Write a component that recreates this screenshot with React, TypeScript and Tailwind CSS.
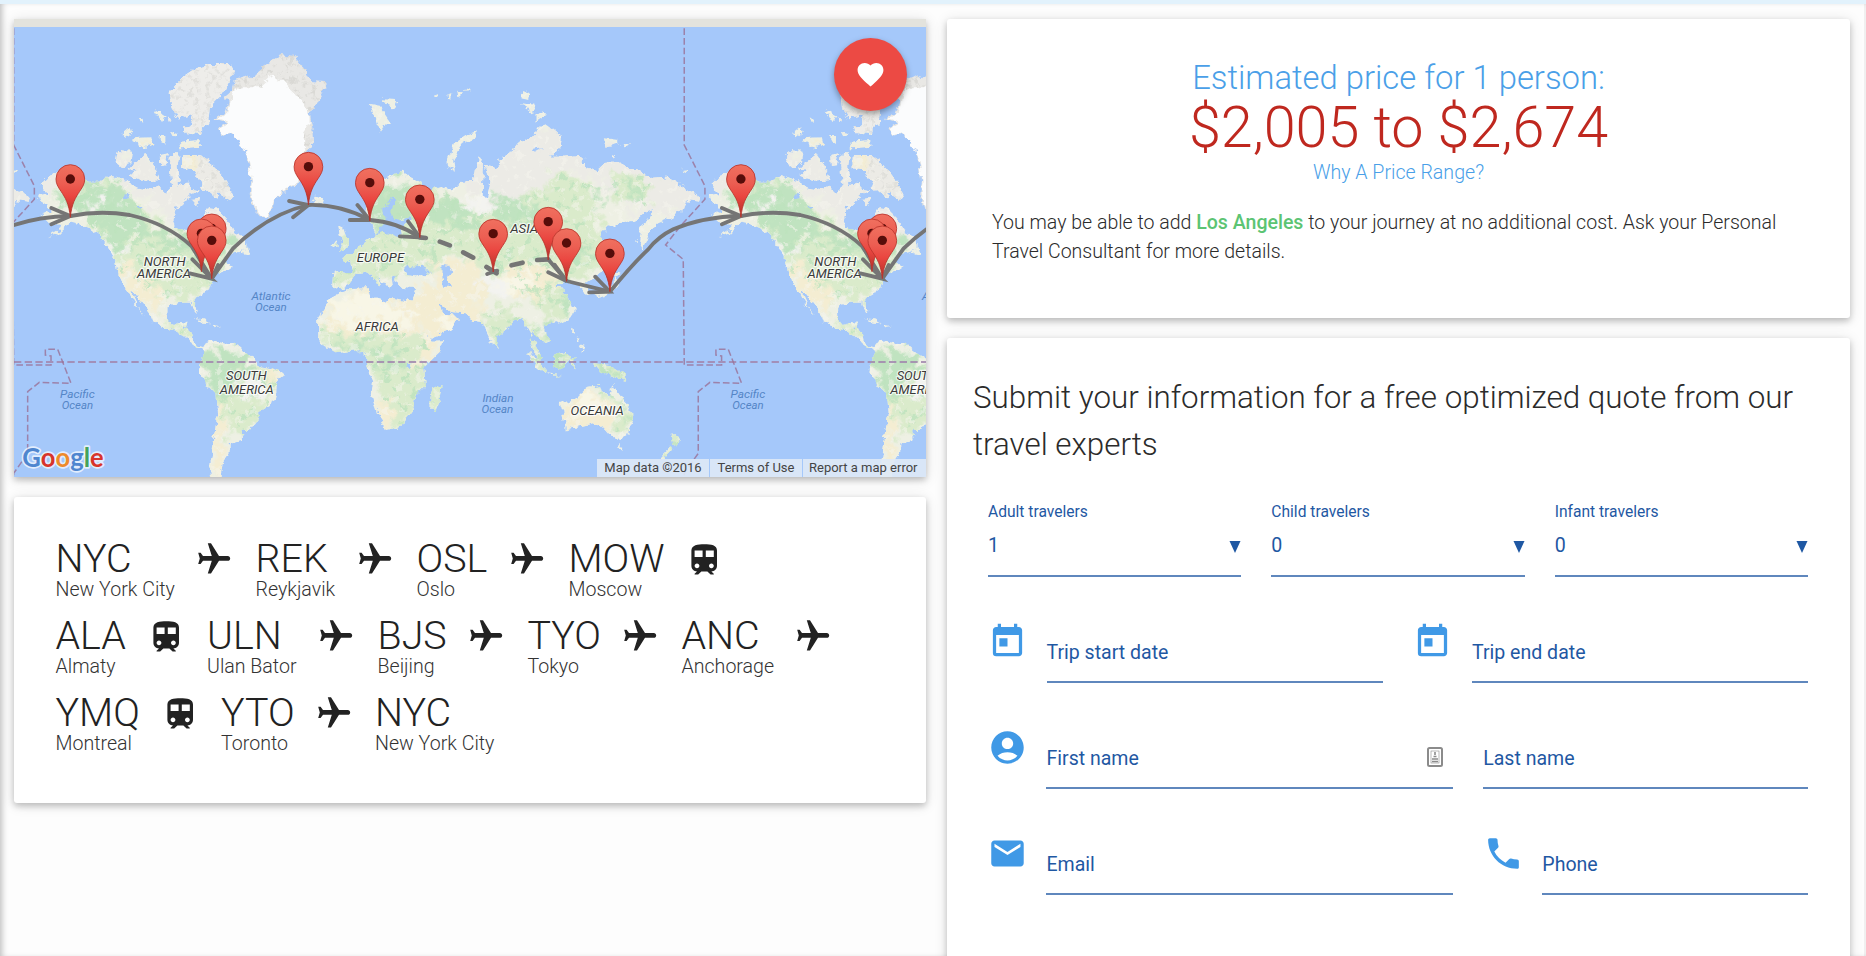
import React from "react";
import {
  MdAccountCircle,
  MdEmail,
  MdFavorite,
  MdFlight,
  MdPhone,
  MdToday,
  MdTrain,
} from "react-icons/md";

const CARD =
  "bg-white shadow-[0_3px_6px_rgba(0,0,0,0.2),0_2px_14px_rgba(0,0,0,0.12)]";

/* ---------- Map data (three units per screen pixel) ---------- */

const WORLD_WIDTH = 2011;

const NORTH_AMERICA =
  "M120 550L145 525L175 515L215 520L260 545L300 545L335 525L375 540L410 560L450 568L470 562L500 575L518 560L512 520L510 490L522 480L530 530L535 560L560 548L575 565L600 568L565 590L530 625L520 660L525 680L560 690L585 702L598 735L606 735L620 700L618 640L628 622L650 625L680 655L700 695L735 715L742 738L720 755L690 765L672 785L700 798L680 812L650 815L636 840L628 868L600 885L585 905L598 935L590 932L575 908L545 908L510 915L503 930L505 960L520 978L535 970L545 963L560 965L555 985L575 1000L580 1020L600 1038L612 1042L604 1046L590 1038L565 1020L550 1005L520 990L490 982L460 965L455 950L430 915L405 882L395 876L420 930L435 948L425 940L400 905L385 875L365 850L355 815L350 780L335 755L318 735L300 705L270 685L240 672L215 665L195 680L172 702L145 712L178 690L185 675L150 668L125 645L150 632L145 612L115 595L118 588L145 582Z";
const SOUTH_AMERICA =
  "M608 1045L618 1030L650 1023L690 1030L705 1028L730 1050L765 1075L770 1095L815 1102L852 1120L830 1150L830 1180L820 1210L780 1235L770 1265L750 1290L725 1290L730 1315L690 1330L690 1355L670 1385L660 1440L635 1440L628 1400L640 1320L655 1240L650 1180L620 1160L597 1115L605 1080L615 1060Z";
const AFRICA =
  "M1010 880L1040 868L1105 865L1110 890L1160 905L1180 895L1240 905L1250 935L1265 970L1285 1005L1295 1022L1333 1020L1320 1055L1270 1105L1275 1160L1245 1190L1240 1230L1205 1280L1155 1290L1135 1240L1115 1180L1120 1140L1100 1100L1100 1070L1075 1050L1040 1055L1010 1060L975 1040L955 1010L955 955L985 910Z";
const EURASIA =
  "M997 860L1000 820L1010 815L1050 820L1058 795L1030 772L1060 755L1090 735L1115 715L1130 708L1128 698L1110 665L1100 650L1100 630L1105 605L1130 570L1155 535L1190 520L1210 515L1222 530L1245 540L1270 555L1285 570L1275 590L1250 590L1262 605L1285 595L1300 570L1325 560L1340 570L1375 555L1400 540L1420 540L1425 510L1440 472L1452 490L1450 540L1448 590L1462 590L1472 545L1458 500L1490 508L1500 480L1530 460L1550 430L1600 410L1620 380L1640 375L1682 410L1680 440L1650 470L1690 470L1740 465L1760 500L1790 512L1820 485L1850 485L1880 500L1920 510L1940 535L2000 530L2050 560L2105 592L2100 605L2060 600L2050 635L2010 655L1975 670L1950 690L1940 720L1925 750L1915 730L1920 690L1950 650L1960 630L1930 640L1910 660L1860 670L1825 680L1800 710L1825 730L1832 760L1825 800L1805 815L1780 830L1762 842L1765 870L1766 880L1750 885L1742 862L1725 855L1695 842L1670 860L1700 865L1690 877L1715 910L1725 930L1705 960L1670 970L1640 975L1630 990L1655 1020L1640 1032L1612 1005L1600 995L1590 1010L1605 1030L1625 1070L1615 1080L1600 1055L1595 1030L1590 1000L1575 975L1565 960L1540 965L1520 990L1495 1010L1490 1040L1475 1030L1455 990L1450 970L1420 965L1400 940L1350 935L1320 910L1330 940L1360 940L1380 960L1360 985L1300 1010L1285 1008L1265 970L1240 920L1240 890L1250 865L1200 860L1180 845L1190 822L1175 830L1180 860L1165 865L1140 835L1125 812L1145 850L1138 860L1105 818L1070 822L1050 850L1025 865Z";
const GREENLAND =
  "M705 240L730 225L760 235L770 215L800 190L840 165L885 172L915 210L930 240L975 243L980 262L950 310L930 340L938 385L940 440L918 452L900 480L897 550L850 575L825 600L805 655L785 655L765 630L750 580L755 540L745 480L730 440L715 415L690 400L662 408L655 385L680 370L645 360L650 345L680 335L690 305L675 290L700 270Z";
const ICE =
  "M700 275L720 262L780 262L820 225L850 245L890 285L928 330L930 372L912 400L920 440L896 480L892 550L848 572L822 600L803 652L786 653L765 620L754 575L757 540L747 480L730 440L715 415L690 398L664 404L660 388L688 370L650 357L685 335L692 305Z";
const ISLANDS =
  "M620 195L690 195L705 220L680 260L660 290L630 320L625 370L605 390L570 380L575 345L535 355L515 320L510 275L545 235L590 205Z M463 330L495 350L487 366Z M500 345L518 362L508 370Z M365 405L395 380L400 395L375 415Z M395 415L455 412L458 432L430 445L400 425Z M415 355L433 350L430 372Z M480 405L500 405L500 435L480 420Z M512 396L532 402L520 412Z M540 425L600 420L600 440L545 445Z M550 380L605 385L600 405L555 400Z M355 450L400 455L395 485L365 505L348 490Z M390 500L440 465L465 500L480 540L430 545L385 530L405 512Z M480 465L507 460L500 495L482 498Z M515 460L540 460L533 500L545 550L515 545L510 500Z M550 465L600 465L640 490L680 545L702 590L690 600L655 578L645 592L610 560L580 510L550 505Z M572 600L600 598L592 622Z M720 758L745 735L750 765Z M935 605L945 590L970 595L965 610Z M1015 685L1030 680L1050 740L1018 755L1027 722Z M995 738L1010 715L1010 748Z M1110 315L1140 320L1160 345L1180 375L1160 370L1140 395L1130 365Z M1150 298L1195 300L1185 325L1160 312Z M1302 285L1318 280L1312 294Z M1340 280L1358 285L1342 298Z M1372 272L1390 278L1376 292Z M1395 270L1410 268L1408 282Z M1430 393L1430 408L1382 440L1360 480L1365 515L1345 505L1343 480L1365 430L1400 405Z M1570 270L1590 278L1585 300L1565 295Z M1560 310L1604 314L1600 340Z M1610 335L1635 345L1610 362Z M1815 415L1855 420L1855 435L1820 440Z M1865 430L1888 437L1875 442Z M1835 463L1848 467L1838 472Z M2045 510L2065 508L2058 516Z M1770 878L1820 870L1850 835L1858 850L1835 880L1790 892Z M1838 818L1862 824L1848 838Z M1838 720L1848 770L1850 800L1840 780Z M585 955L612 958L632 970L610 968Z M638 974L662 978L645 982Z M1300 1170L1325 1158L1320 1200L1308 1230L1292 1225L1292 1195Z M1660 1065L1700 1052L1712 1075L1685 1105L1660 1095Z M1585 1058L1605 1070L1640 1110L1635 1122L1610 1100Z M1640 1122L1680 1128L1660 1131Z M1712 1078L1728 1072L1718 1088L1724 1105L1715 1100Z M1780 1090L1830 1095L1870 1120L1880 1142L1840 1130L1810 1125Z M1720 980L1728 985L1728 1005L1720 1002Z M1738 1035L1754 1040L1748 1052Z M1728 1012L1740 1020L1732 1028Z M1496 1036L1503 1044L1499 1050Z M1683 1212L1725 1195L1745 1175L1765 1160L1800 1155L1805 1175L1830 1190L1840 1155L1855 1180L1875 1205L1900 1240L1900 1265L1880 1310L1855 1317L1830 1305L1810 1280L1780 1270L1730 1280L1698 1292L1692 1260Z M1858 1335L1875 1338L1867 1353Z M2015 1298L2040 1320L2020 1335Z M2015 1338L1980 1375L1990 1380L2020 1345Z";

const LAND = [NORTH_AMERICA, SOUTH_AMERICA, AFRICA, EURASIA, ISLANDS].join(" ");

const INLAND_WATER =
  "M1125 705L1150 695L1200 713L1210 708L1202 672L1235 662L1232 652L1190 660L1175 650L1175 630L1190 598L1175 595L1150 630L1155 660L1140 690Z M1210 810L1220 792L1245 800L1270 795L1290 820L1260 830L1220 825Z M1325 795L1350 797L1360 818L1343 828L1350 860L1330 860L1325 830Z M1222 1090L1238 1088L1234 1100L1222 1100Z M362 585L385 582L388 595L368 597Z M405 615L435 622L420 630Z M1595 450L1630 445L1605 458Z";

const GREEN_STRONG =
  "M160 590L340 540L400 590L440 680L560 710L600 760L500 740L400 700L380 740L340 740L300 680L200 620Z M640 720L700 700L720 740L650 770Z M610 1050L700 1040L770 1090L730 1130L680 1180L620 1150Z M1110 1060L1210 1065L1200 1120L1120 1110Z M1120 600L1190 540L1250 560L1240 640L1160 690L1120 690Z M1250 600L1330 580L1400 620L1440 670L1360 680L1260 660Z M1440 590L1600 600L1620 690L1500 660Z M1780 560L1830 560L1810 620Z M1880 530L1920 570L1890 620Z M1660 1050L1700 1050L1700 1110L1650 1100Z M1680 860L1730 910L1700 960L1680 930Z M1720 720L1790 760L1780 800L1720 770Z M1790 1090L1880 1130L1800 1120Z M975 1040L1080 1035L1080 1060L1000 1060Z M1590 980L1640 980L1630 1020Z M1800 1150L1900 1240L1880 1250L1840 1180Z";
const GREEN_SOFT =
  "M180 560L340 530L480 680L620 720L680 700L720 740L620 860L600 900L500 900L420 860L350 800L310 730Z M480 950L570 960L600 1050L540 1010Z M600 1060L850 1110L800 1220L720 1320L660 1260L650 1180Z M960 990L1280 1000L1290 1060L1270 1200L1200 1280L1150 1200L1100 1090L1020 1070Z M1000 720L1300 640L1400 760L1300 800L1100 850L1000 860Z M1100 560L1300 560L1440 640L1640 560L1680 520L1780 560L1800 680L1830 800L1700 850L1720 920L1650 970L1600 900L1450 820L1400 760L1240 700Z M1440 940L1520 930L1600 980L1640 1040L1480 1040Z M1600 1050L1900 1100L1900 1160L1600 1120Z M1760 1150L1830 1180L1900 1240L1880 1310L1840 1290L1860 1220Z M1290 1160L1340 1160L1320 1240L1290 1230Z M2000 1280L2060 1320L1980 1400Z M1830 510L1960 540L1940 620L1850 600Z";
const SAND =
  "M370 800L420 800L470 860L480 960L420 900L380 860Z M960 930L1110 860L1260 900L1270 980L1200 1000L960 990Z M1240 870L1340 860L1420 920L1460 940L1400 990L1280 1010L1250 950Z M1300 800L1420 780L1460 860L1440 920L1300 880Z M1440 840L1540 790L1700 800L1670 860L1600 890L1480 870Z M800 1100L860 1100L840 1160L810 1150Z M640 1200L670 1200L680 1400L640 1440Z M1130 1200L1180 1200L1180 1300L1130 1280Z M1240 1050L1330 1010L1310 1060L1260 1110Z M1680 1200L1760 1170L1820 1200L1840 1270L1690 1300Z M540 430L600 420L560 440Z M550 465L575 465L570 510L550 505Z M400 410L450 420L430 440Z M140 640L180 640L170 670Z";
const PALE =
  "M1000 900L1110 880L1240 930L1230 970L1000 970Z M1460 840L1600 820L1580 870L1490 880Z M1320 950L1380 950L1350 990L1310 990Z M1740 1190L1800 1190L1790 1240L1730 1240Z";
const TUNDRA =
  "M120 500L760 430L740 700L600 720L560 650L480 640L420 580L340 530L250 540L140 580Z M1340 540L1450 460L1700 360L2130 560L2110 640L1900 640L1760 520L1660 540L1600 620L1450 590Z";
const SNOW =
  "M1390 600L1460 580L1490 640L1410 650Z M1440 830L1490 820L1540 890L1480 880Z M275 598L340 598L350 625L280 620Z M300 690L360 760L350 800L320 750Z M720 1150L760 1120L800 1190L720 1210Z";

const DATE_LINE =
  "M2053 85V435L2115 558V598L2040 680L1997 735L2050 778L2053 1095H2165V1068L2148 1065V1048H2185L2225 1150L2130 1147L2095 1175V1360L2053 1420V1440";

const ROUTE_SOLID = [
  "M212 648Q300 630 390 645Q500 670 575 738L636 836",
  "M636 836L700 745Q810 640 926 615",
  "M926 615Q1020 612 1110 660",
  "M1110 660Q1190 665 1260 712",
  "M1645 778L1700 843L1830 875",
  "M1830 875Q1900 790 1945 748Q1975 710 2020 688Q2110 650 2223 648",
];
const ROUTE_DASHES =
  "M1260 712L1278 714M1320 725L1350 736M1390 757L1420 773M1460 801L1490 820M1535 796L1568 788M1612 780L1645 778";
const ARROWS =
  "M155 624L212 648L155 673 M578 778L636 836L570 820 M655 795L636 836 M868 603L926 615L880 652 M1073 615L1110 660L1050 660 M1225 664L1260 712L1200 709 M1460 801L1480 815L1492 812M1462 822L1480 815 M1645 817L1700 843L1664 794 M1786 830L1830 875L1768 877";

const PINS: [number, number][] = [
  [212, 652],
  [926, 615],
  [1110, 663],
  [1260, 713],
  [636, 800],
  [605, 815],
  [636, 836],
  [1480, 816],
  [1645, 780],
  [1700, 844],
  [1830, 875],
];

const LABELS: { text: string; x: number; y: number; w: number; ocean?: boolean }[] = [
  { text: "NORTH", x: 432, y: 799, w: 126 },
  { text: "AMERICA", x: 412, y: 835, w: 162 },
  { text: "SOUTH", x: 679, y: 1141, w: 122 },
  { text: "AMERICA", x: 660, y: 1181, w: 162 },
  { text: "EUROPE", x: 1071, y: 785, w: 142 },
  { text: "AFRICA", x: 1067, y: 993, w: 130 },
  { text: "ASIA", x: 1531, y: 698, w: 84 },
  { text: "OCEANIA", x: 1712, y: 1244, w: 160 },
  { text: "Atlantic", x: 755, y: 901, w: 117, ocean: true },
  { text: "Ocean", x: 766, y: 932, w: 95, ocean: true },
  { text: "Pacific", x: 181, y: 1195, w: 104, ocean: true },
  { text: "Ocean", x: 186, y: 1227, w: 94, ocean: true },
  { text: "Indian", x: 1448, y: 1207, w: 93, ocean: true },
  { text: "Ocean", x: 1445, y: 1238, w: 95, ocean: true },
];

function Pin({ x, y }: { x: number; y: number }) {
  return (
    <g transform={`translate(${x} ${y})`}>
      <path
        d="M0 0C-4 -42 -16 -60 -28 -78C-38 -93 -43 -101 -43 -115A43 43 0 0 1 43 -115C43 -101 38 -93 28 -78C16 -60 4 -42 0 0Z"
        fill="url(#pinFill)"
        stroke="#b8322a"
        strokeWidth="2.5"
      />
      <circle cx="0" cy="-115" r="14" fill="#560d0a" />
    </g>
  );
}

function WorldMap() {
  const offsets = [-WORLD_WIDTH, 0, WORLD_WIDTH];
  return (
    <svg
      viewBox="43 81 2735 1350"
      preserveAspectRatio="none"
      className="block h-[450px] w-full font-['Roboto',sans-serif]"
    >
      <defs>
        <linearGradient id="pinFill" x1="0" y1="0" x2="0" y2="1">
          <stop offset="0" stopColor="#f0705f" />
          <stop offset="0.35" stopColor="#ec5e52" />
          <stop offset="0.6" stopColor="#ea4640" />
          <stop offset="1" stopColor="#b02f28" />
        </linearGradient>
        <clipPath id="landClip">
          <path d={LAND} />
        </clipPath>
        <filter id="coast" filterUnits="userSpaceOnUse" x="-20" y="60" width="2300" height="1400">
          <feTurbulence type="fractalNoise" baseFrequency="0.045" numOctaves="3" seed="4" result="n" />
          <feDisplacementMap in="SourceGraphic" in2="n" scale="24" xChannelSelector="R" yChannelSelector="G" />
        </filter>
        <filter id="zone" filterUnits="userSpaceOnUse" x="-20" y="60" width="2300" height="1400">
          <feTurbulence type="fractalNoise" baseFrequency="0.03" numOctaves="4" seed="9" result="n" />
          <feDisplacementMap in="SourceGraphic" in2="n" scale="110" xChannelSelector="R" yChannelSelector="G" result="d" />
          <feGaussianBlur in="d" stdDeviation="3" />
        </filter>
        <filter
          id="specks"
          filterUnits="userSpaceOnUse"
          x="-20"
          y="60"
          width="2300"
          height="1400"
          colorInterpolationFilters="sRGB"
        >
          <feTurbulence type="fractalNoise" baseFrequency="0.04" numOctaves="4" seed="21" />
          <feColorMatrix values="0 0 0 0 0.96  0 0 0 0 0.96  0 0 0 0 0.93  9 0 0 0 -5.2" />
        </filter>
        <filter
          id="moss"
          filterUnits="userSpaceOnUse"
          x="-20"
          y="60"
          width="2300"
          height="1400"
          colorInterpolationFilters="sRGB"
        >
          <feTurbulence type="fractalNoise" baseFrequency="0.035" numOctaves="4" seed="33" />
          <feColorMatrix values="0 0 0 0 0.74  0 0 0 0 0.89  0 0 0 0 0.74  0 9 0 0 -5.2" />
          <feComposite in2="SourceAlpha" operator="in" />
        </filter>
        <filter
          id="relief"
          filterUnits="userSpaceOnUse"
          x="-20"
          y="60"
          width="2300"
          height="1400"
          colorInterpolationFilters="sRGB"
        >
          <feTurbulence type="fractalNoise" baseFrequency="0.06" numOctaves="3" seed="2" />
          <feColorMatrix values="0 0 0 0 0.8  0 0 0 0 0.8  0 0 0 0 0.78  0 0 5 0 -2.6" />
          <feComposite in2="SourceAlpha" operator="in" />
        </filter>
        <g id="world">
          <g filter="url(#coast)">
            <g clipPath="url(#landClip)">
              <rect x="-20" y="60" width="2300" height="1400" fill="#eef0e4" />
              <g filter="url(#zone)">
                <path d={TUNDRA} fill="#ecebe6" />
                <path d={GREEN_SOFT} fill="#daebcb" />
                <path d={SAND} fill="#f4edd2" />
                <path d={PALE} fill="#f8f6e6" />
                <path d={GREEN_STRONG} fill="#c0e3c0" />
                <path d={SNOW} fill="#f3f3f0" />
              </g>
              <path d={GREEN_SOFT} fill="#000" filter="url(#moss)" opacity="0.8" />
              <rect x="-20" y="60" width="2300" height="1400" fill="#fff" filter="url(#specks)" opacity="0.5" />
              <path d="M500 180H720V400H500Z" fill="#eeedea" />
              <path d="M500 180H720V400H500Z M580 460H710V610H580Z" fill="#000" filter="url(#relief)" opacity="0.4" />
            </g>
            <path d={GREENLAND} fill="#e9e8e5" />
            <path d={GREENLAND} fill="#000" filter="url(#relief)" opacity="0.5" />
            <path d={ICE} fill="#fbfcfd" />
            <path d={INLAND_WATER} fill="#a5c8fa" />
          </g>
        </g>
        <g id="dateLine">
          <path d={DATE_LINE} fill="none" stroke="#9a7096" strokeWidth="4.5" strokeDasharray="20 9" opacity="0.8" />
        </g>
        <g id="route" fill="none" stroke="#757575" strokeWidth="11.5">
          {ROUTE_SOLID.map((d) => (
            <path key={d} d={d} strokeLinejoin="round" />
          ))}
          <path d={ROUTE_DASHES} strokeWidth="14" strokeLinecap="round" />
          <path d={ARROWS} strokeLinecap="round" />
        </g>
        <g id="pins">
          {PINS.map(([x, y]) => (
            <Pin key={`${x}-${y}`} x={x} y={y} />
          ))}
        </g>
        <g id="labels" fontStyle="italic">
          {LABELS.map((l) => (
            <text
              key={`${l.text}-${l.x}`}
              x={l.x}
              y={l.y}
              textLength={l.w}
              lengthAdjust="spacingAndGlyphs"
              fontSize={l.ocean ? 34 : 39}
              fontWeight="400"
              fill={l.ocean ? "#5485c6" : "#3a3a3a"}
              stroke={l.ocean ? "none" : "#ffffff"}
              strokeOpacity="0.75"
              strokeWidth="7"
              strokeLinejoin="round"
              paintOrder="stroke"
            >
              {l.text}
            </text>
          ))}
        </g>
      </defs>
      <rect x="43" y="81" width="2735" height="1350" fill="#a5c8fa" />
      {offsets.map((o) => (
        <use key={o} href="#world" x={o} />
      ))}
      <path d="M43 1086H2778" stroke="#a287ae" strokeWidth="6" strokeDasharray="22 10" opacity="0.85" />
      {["#dateLine", "#labels", "#route", "#pins"].map((layer) =>
        offsets.map((o) => <use key={`${layer}${o}`} href={layer} x={o} />),
      )}
      <text
        x="68"
        y="1401"
        fontSize="81"
        fontWeight="700"
        textLength="244"
        lengthAdjust="spacingAndGlyphs"
        stroke="#ffffff"
        strokeOpacity="0.7"
        strokeWidth="10"
        strokeLinejoin="round"
        paintOrder="stroke"
        className="font-['Lato',sans-serif]"
      >
        <tspan fill="#4f86cf">G</tspan>
        <tspan fill="#d8352c">o</tspan>
        <tspan fill="#ee8a2a">o</tspan>
        <tspan fill="#4f86cf">g</tspan>
        <tspan fill="#45a35a">l</tspan>
        <tspan fill="#d8352c">e</tspan>
      </text>
    </svg>
  );
}

function MapCard() {
  return (
    <section className={`relative h-[458px] ${CARD}`}>
      <div className="h-[8px] bg-[#e3e3dd]" />
      <WorldMap />
      <div className="absolute bottom-0 right-0 flex h-[18px] gap-px text-[13px] leading-[18px] text-[#444]">
        <span className="w-[112px] bg-[#dfe9f6]/90 text-center">Map data ©2016</span>
        <span className="w-[92px] bg-[#dfe9f6]/90 text-center">Terms of Use</span>
        <span className="w-[123px] bg-[#dfe9f6]/90 pl-1.5">Report a map error</span>
      </div>
      <button className="absolute right-[19px] top-[19px] flex size-[73px] items-center justify-center rounded-full bg-[#ec4a44] text-white shadow-[0_3px_6px_rgba(0,0,0,0.35)]">
        <MdFavorite className="mr-px size-[31px]" />
      </button>
    </section>
  );
}

type Leg = { code: string; city: string; by?: "plane" | "train"; w: string };

const LEGS: Leg[][] = [
  [
    { code: "NYC", city: "New York City", by: "plane", w: "w-[200px]" },
    { code: "REK", city: "Reykjavik", by: "plane", w: "w-[161px]" },
    { code: "OSL", city: "Oslo", by: "plane", w: "w-[152px]" },
    { code: "MOW", city: "Moscow", by: "train", w: "w-[177px]" },
  ],
  [
    { code: "ALA", city: "Almaty", by: "train", w: "w-[151.5px]" },
    { code: "ULN", city: "Ulan Bator", by: "plane", w: "w-[170.5px]" },
    { code: "BJS", city: "Beijing", by: "plane", w: "w-[150px]" },
    { code: "TYO", city: "Tokyo", by: "plane", w: "w-[154px]" },
    { code: "ANC", city: "Anchorage", by: "plane", w: "w-[173px]" },
  ],
  [
    { code: "YMQ", city: "Montreal", by: "train", w: "w-[165.5px]" },
    { code: "YTO", city: "Toronto", by: "plane", w: "w-[154px]" },
    { code: "NYC", city: "New York City", w: "w-[150px]" },
  ],
];

function Itinerary() {
  return (
    <section className={`h-[306px] rounded-[3px] pl-[41.5px] pt-[38px] ${CARD}`}>
      {LEGS.map((row, i) => (
        <div key={i} className="flex h-[77.2px]">
          {row.map((leg) => (
            <div key={leg.city} className={`flex justify-between ${leg.w} pr-[22px]`}>
              <div className="font-light whitespace-nowrap">
                <div className="text-[39.4px] leading-[48px] text-[#222]">{leg.code}</div>
                <div className="-mt-[3.5px] text-[19.6px] leading-[20px] text-[#333]">{leg.city}</div>
              </div>
              {leg.by === "plane" && <MdFlight className="mt-[5px] size-[38.4px] shrink-0 rotate-90 text-[#222]" />}
              {leg.by === "train" && <MdTrain className="mt-[6px] size-[38.4px] shrink-0 text-[#222]" />}
            </div>
          ))}
        </div>
      ))}
    </section>
  );
}

function PriceCard() {
  return (
    <section className={`h-[299px] rounded-[3px] px-[45px] pt-[37px] font-light ${CARD}`}>
      <div className="text-center">
        <div className="text-[32.8px] leading-[45px] text-[#4a9fe8]">Estimated price for 1 person:</div>
        <div className="text-[57.5px] leading-[53px] text-[#bf281f]">$2,005 to $2,674</div>
        <div className="mt-[4px] text-[19.6px] leading-[29px] text-[#4a9fe8]">Why A Price Range?</div>
      </div>
      <p className="-mr-4 mt-[22px] w-[800px] text-[19.55px] leading-[28.8px] text-[#2b2b2b]">
        You may be able to add <span className="font-medium text-[#5cc473]">Los Angeles</span> to your journey at no
        additional cost. Ask your Personal Travel Consultant for more details.
      </p>
    </section>
  );
}

function Select({ label, value }: { label: string; value: string }) {
  return (
    <label className="block h-[75px] flex-1 border-b-2 border-[#5f87bd] text-[#1f58a3]">
      <span className="block text-[15.6px] leading-[20px]">{label}</span>
      <span className="mt-[12px] flex items-center justify-between text-[19.6px] leading-[24px]">
        {value}
        <svg viewBox="0 0 12 12" className="mt-0.5 h-[12px] w-[12px] fill-[#1f58a3]">
          <path d="M0.5 0H11.5L6 12Z" />
        </svg>
      </span>
    </label>
  );
}

function Field({ label, className, children }: { label: string; className: string; children?: React.ReactNode }) {
  return (
    <div
      className={`flex h-[58px] items-center justify-between border-b-2 border-[#5f87bd] text-[19.55px] text-[#1f58a3] ${className}`}
    >
      <span>{label}</span>
      {children}
    </div>
  );
}

function QuoteForm() {
  return (
    <section className={`h-[660px] rounded-[3px] pl-[26px] pr-[42px] pt-[35.5px] ${CARD}`}>
      <h2 className="-mr-4 text-[31.35px] font-light leading-[47px] text-[#2b2b2b]">
        Submit your information for a free optimized quote from our travel experts
      </h2>
      <div className="ml-[15px] mt-[34px] flex gap-[30px]">
        <Select label="Adult travelers" value="1" />
        <Select label="Child travelers" value="0" />
        <Select label="Infant travelers" value="0" />
      </div>
      <div className="ml-[15px] mt-[45px] text-[#4099e6]">
        <div className="flex h-[106px]">
          <MdToday className="size-[39px]" />
          <Field label="Trip start date" className="ml-[19.5px] mt-[3px] w-[336px]" />
          <MdToday className="ml-[30.5px] size-[39px]" />
          <Field label="Trip end date" className="ml-[20px] mt-[3px] w-[336px]" />
        </div>
        <div className="flex h-[106px]">
          <MdAccountCircle className="size-[39px]" />
          <Field label="First name" className="ml-[19.5px] mt-[3px] w-[407px] pr-[10px]">
            <svg viewBox="0 0 16 20" className="-mt-1 h-[20px] w-[16px]" fill="none" stroke="#8b8b8b">
              <rect x="1" y="1" width="14" height="18" rx="1.5" strokeWidth="2" />
              <path d="M8 5V8M6.5 9.5H9.5M5 12H11M5 14.5H11" strokeWidth="1.6" />
              <rect x="4" y="4" width="8" height="12" strokeWidth="0.6" />
            </svg>
          </Field>
          <Field label="Last name" className="ml-[30px] mt-[3px] w-[325px]" />
        </div>
        <div className="flex h-[106px]">
          <MdEmail className="size-[39px]" />
          <Field label="Email" className="ml-[19.5px] mt-[3px] w-[407px]" />
          <MdPhone className="-mt-px ml-[30px] size-[41px]" />
          <Field label="Phone" className="ml-[18.5px] mt-[3px] w-[266px]" />
        </div>
      </div>
    </section>
  );
}

export default function App() {
  return (
    <div className="h-[956px] w-full overflow-hidden border-t-[4px] border-[#e2f2fc] bg-[#fdfdfd] font-['Roboto',sans-serif] shadow-[inset_5px_0_6px_-3px_rgba(0,0,0,0.25),inset_-2px_0_0_#f0f0f0]">
      <main className="flex gap-[21px] pl-[14px] pt-[15px]">
        <div className="flex w-[912px] flex-col gap-5">
          <MapCard />
          <Itinerary />
        </div>
        <div className="flex w-[903px] flex-col gap-5">
          <PriceCard />
          <QuoteForm />
        </div>
      </main>
    </div>
  );
}
